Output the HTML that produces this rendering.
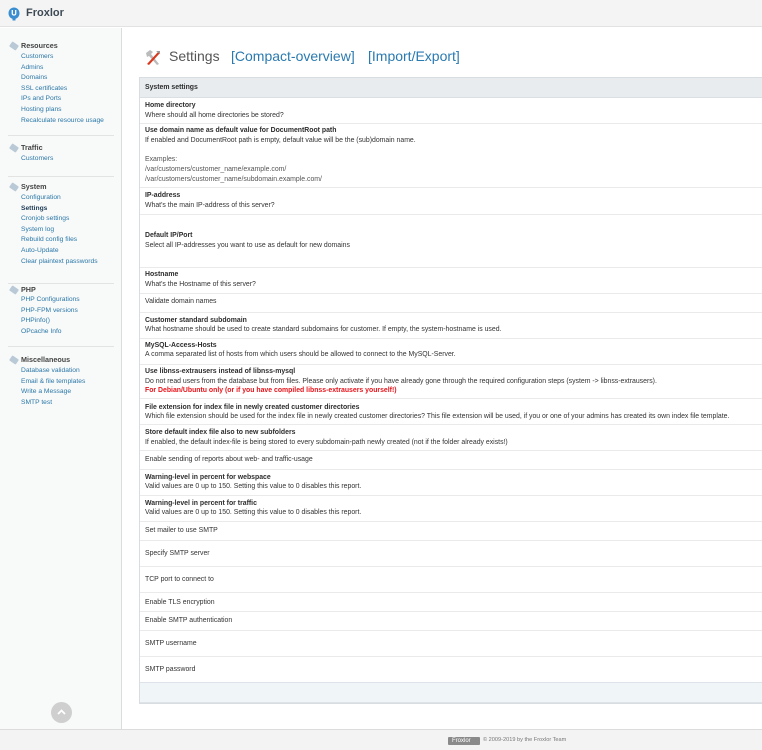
<!DOCTYPE html>
<html><head><meta charset="utf-8">
<style>
*{margin:0;padding:0;box-sizing:border-box}
body{width:762px;height:750px;position:relative;overflow:hidden;background:#fff;font-family:"Liberation Sans","DejaVu Sans",sans-serif;color:#333}
.a{position:absolute;white-space:nowrap}
#hdr{position:absolute;left:0;top:0;width:762px;height:27px;background:#f4f4f4;border-bottom:1px solid #e2e2e2}
#side{position:absolute;left:0;top:28px;width:122px;height:701px;background:#f8f9f9;border-right:1px solid #dcdcdc}
.sh{position:absolute;left:21px;font-size:7.2px;font-weight:bold;color:#444}
.tag{position:absolute;left:10px;width:8px;height:6px;background:#b9c9d6;border-radius:1px;transform:rotate(35deg)}
.sl{position:absolute;left:21px;font-size:6.7px;color:#2b78a8;white-space:nowrap}
.sep{position:absolute;left:8px;width:106px;height:1px;background:#e3e3e3}
#tbl{position:absolute;left:139px;top:77px;width:630px;height:627px;border:1px solid #d8dde1;background:#fff}
.r{position:absolute;left:0;width:630px;height:1px;background:#eaeaea}
.t{position:absolute;left:5px;font-size:6.9px;white-space:nowrap;color:#333}
.b{font-weight:bold;color:#2d2d2d}
#ftr{position:absolute;left:0;top:729px;width:762px;height:21px;background:#f3f3f3;border-top:1px solid #dcdcdc}
</style></head><body>
<div id="hdr">
 <svg class="a" style="left:8px;top:7px" width="12" height="14" viewBox="0 0 12 14"><path d="M6 0.5C2.8 0.5 0.5 3 0.5 6.2c0 3 2 5 4 5.6V13.5h3v-1.7c2-.6 4-2.6 4-5.6C11.5 3 9.2.5 6 .5z" fill="#3b8fd0"/><path d="M4.3 3v3.6c0 .8.8 1.4 1.7 1.4s1.7-.6 1.7-1.4V3" stroke="#fff" stroke-width="1.3" fill="none"/></svg>
 <div class="a" style="left:26px;top:7px;font-size:11px;font-weight:bold;color:#3d4a55">Froxlor</div>
</div>
<div id="side">
 <div class="tag" style="top:15px"></div><div class="sh" style="top:13px">Resources</div>
 <div class="sl" style="top:25px">Customers</div>
 <div class="sl" style="top:35.6px">Admins</div>
 <div class="sl" style="top:46.2px">Domains</div>
 <div class="sl" style="top:56.8px">SSL certificates</div>
 <div class="sl" style="top:67.4px">IPs and Ports</div>
 <div class="sl" style="top:78px">Hosting plans</div>
 <div class="sl" style="top:88.6px">Recalculate resource usage</div>
 <div class="sep" style="top:107px"></div>
 <div class="tag" style="top:117px"></div><div class="sh" style="top:115px">Traffic</div>
 <div class="sl" style="top:127px">Customers</div>
 <div class="sep" style="top:148px"></div>
 <div class="tag" style="top:156px"></div><div class="sh" style="top:154px">System</div>
 <div class="sl" style="top:166px">Configuration</div>
 <div class="sl" style="top:176.6px;color:#1d3b55;font-weight:bold">Settings</div>
 <div class="sl" style="top:187.2px">Cronjob settings</div>
 <div class="sl" style="top:197.8px">System log</div>
 <div class="sl" style="top:208.4px">Rebuild config files</div>
 <div class="sl" style="top:219px">Auto-Update</div>
 <div class="sl" style="top:229.6px">Clear plaintext passwords</div>
 <div class="sep" style="top:255px"></div>
 <div class="tag" style="top:259px"></div><div class="sh" style="top:257px">PHP</div>
 <div class="sl" style="top:268px">PHP Configurations</div>
 <div class="sl" style="top:278.6px">PHP-FPM versions</div>
 <div class="sl" style="top:289.2px">PHPinfo()</div>
 <div class="sl" style="top:299.8px">OPcache Info</div>
 <div class="sep" style="top:318px"></div>
 <div class="tag" style="top:329px"></div><div class="sh" style="top:327px">Miscellaneous</div>
 <div class="sl" style="top:339px">Database validation</div>
 <div class="sl" style="top:349.6px">Email &amp; file templates</div>
 <div class="sl" style="top:360.2px">Write a Message</div>
 <div class="sl" style="top:370.8px">SMTP test</div>
 <div class="a" style="left:51px;top:674px;width:21px;height:21px;border-radius:50%;background:#cfcfcf"></div>
 <svg class="a" style="left:57px;top:681px" width="9" height="6" viewBox="0 0 9 6"><path d="M1 5L4.5 1.5 8 5" stroke="#fff" stroke-width="1.8" fill="none"/></svg>
</div>
<svg class="a" style="left:144px;top:49px" width="18" height="17" viewBox="0 0 18 17"><path d="M2 4l4-3 3 2-2 2 8 10-2 1-8-9-2 1z" fill="#bbb"/><path d="M3 15L14 3l2 1-11 12z" fill="#d9381e"/><path d="M12 2l4 0 0 3z" fill="#999"/></svg>
<div class="a" style="left:169px;top:48px;font-size:14px;color:#555">Settings</div>
<div class="a" style="left:231px;top:48px;font-size:14px;color:#2a7ab0">[Compact-overview]</div>
<div class="a" style="left:368px;top:48px;font-size:14px;color:#2a7ab0">[Import/Export]</div>
<div id="tbl">
 <div class="a" style="left:0;top:0;width:630px;height:20px;background:#e8ecef;border-bottom:1px solid #dadfe3"></div>
 <div class="t b" style="top:6px">System settings</div>
 <div class="t b" style="top:24px">Home directory</div>
 <div class="t" style="top:34px">Where should all home directories be stored?</div>
 <div class="r" style="top:45px"></div>
 <div class="t b" style="top:49px">Use domain name as default value for DocumentRoot path</div>
 <div class="t" style="top:59px">If enabled and DocumentRoot path is empty, default value will be the (sub)domain name.</div>
 <div class="t" style="top:78px;color:#555">Examples:</div>
 <div class="t" style="top:88px;color:#555">/var/customers/customer_name/example.com/</div>
 <div class="t" style="top:98px;color:#555">/var/customers/customer_name/subdomain.example.com/</div>
 <div class="r" style="top:109px"></div>
 <div class="t b" style="top:114px">IP-address</div>
 <div class="t" style="top:124px">What's the main IP-address of this server?</div>
 <div class="r" style="top:136px"></div>
 <div class="t b" style="top:154px">Default IP/Port</div>
 <div class="t" style="top:164px">Select all IP-addresses you want to use as default for new domains</div>
 <div class="r" style="top:189px"></div>
 <div class="t b" style="top:193px">Hostname</div>
 <div class="t" style="top:203px">What's the Hostname of this server?</div>
 <div class="r" style="top:215px"></div>
 <div class="t" style="top:220px">Validate domain names</div>
 <div class="r" style="top:234px"></div>
 <div class="t b" style="top:239px">Customer standard subdomain</div>
 <div class="t" style="top:248px">What hostname should be used to create standard subdomains for customer. If empty, the system-hostname is used.</div>
 <div class="r" style="top:260px"></div>
 <div class="t b" style="top:264px">MySQL-Access-Hosts</div>
 <div class="t" style="top:273px">A comma separated list of hosts from which users should be allowed to connect to the MySQL-Server.</div>
 <div class="r" style="top:286px"></div>
 <div class="t b" style="top:290px">Use libnss-extrausers instead of libnss-mysql</div>
 <div class="t" style="top:300px">Do not read users from the database but from files. Please only activate if you have already gone through the required configuration steps (system -&gt; libnss-extrausers).</div>
 <div class="t" style="top:309px;color:#e8141b;font-weight:bold">For Debian/Ubuntu only (or if you have compiled libnss-extrausers yourself!)</div>
 <div class="r" style="top:320px"></div>
 <div class="t b" style="top:326px">File extension for index file in newly created customer directories</div>
 <div class="t" style="top:335px">Which file extension should be used for the index file in newly created customer directories? This file extension will be used, if you or one of your admins has created its own index file template.</div>
 <div class="r" style="top:346px"></div>
 <div class="t b" style="top:351px">Store default index file also to new subfolders</div>
 <div class="t" style="top:361px">If enabled, the default index-file is being stored to every subdomain-path newly created (not if the folder already exists!)</div>
 <div class="r" style="top:372px"></div>
 <div class="t" style="top:378px">Enable sending of reports about web- and traffic-usage</div>
 <div class="r" style="top:391px"></div>
 <div class="t b" style="top:396px">Warning-level in percent for webspace</div>
 <div class="t" style="top:405px">Valid values are 0 up to 150. Setting this value to 0 disables this report.</div>
 <div class="r" style="top:417px"></div>
 <div class="t b" style="top:422px">Warning-level in percent for traffic</div>
 <div class="t" style="top:431px">Valid values are 0 up to 150. Setting this value to 0 disables this report.</div>
 <div class="r" style="top:443px"></div>
 <div class="t" style="top:449px">Set mailer to use SMTP</div>
 <div class="r" style="top:462px"></div>
 <div class="t" style="top:472px">Specify SMTP server</div>
 <div class="r" style="top:488px"></div>
 <div class="t" style="top:498px">TCP port to connect to</div>
 <div class="r" style="top:514px"></div>
 <div class="t" style="top:521px">Enable TLS encryption</div>
 <div class="r" style="top:533px"></div>
 <div class="t" style="top:539px">Enable SMTP authentication</div>
 <div class="r" style="top:552px"></div>
 <div class="t" style="top:562px">SMTP username</div>
 <div class="r" style="top:578px"></div>
 <div class="t" style="top:588px">SMTP password</div>
 <div class="a" style="left:0;top:604px;width:630px;height:21px;background:#f0f5f8;border-top:1px solid #dde3e8;border-bottom:1px solid #dde3e8"></div>
</div>
<div id="ftr">
 <div class="a" style="left:448px;top:7px;width:32px;height:8px;background:#8a8a8a;border-radius:1px;color:#fff;font-size:6px;line-height:8px;padding-left:4px">Froxlor</div>
 <div class="a" style="left:483px;top:7px;font-size:5.6px;color:#777">© 2009-2019 by the Froxlor Team</div>
</div>
</body></html>
